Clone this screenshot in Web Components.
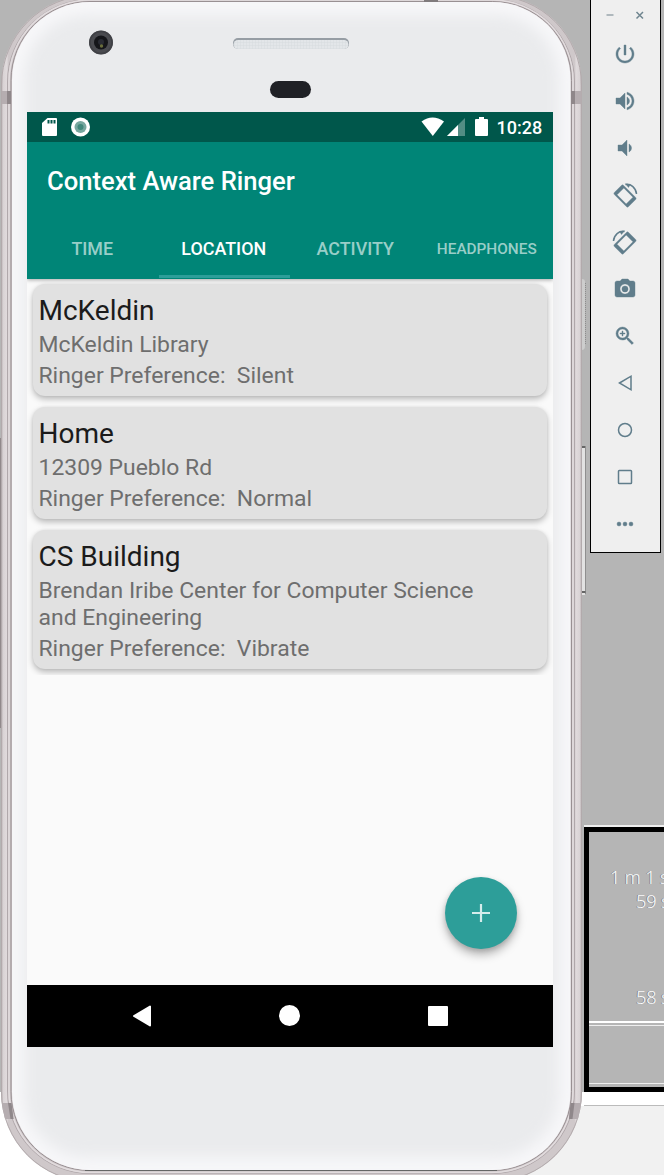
<!DOCTYPE html>
<html lang="en">
<head>
<meta charset="utf-8">
<title>Context Aware Ringer</title>
<style>
html,body{margin:0;height:100%;overflow:hidden;font-family:Roboto,sans-serif}
</style>
</head>
<body>
<emulator-desktop>
  <phone-device>
    <status-bar time="10:28"></status-bar>
    <app-bar>Context Aware Ringer</app-bar>
    <tab-bar>
      <tab-item>TIME</tab-item>
      <tab-item active>LOCATION</tab-item>
      <tab-item>ACTIVITY</tab-item>
      <tab-item small>HEADPHONES</tab-item>
    </tab-bar>
    <place-list>
      <place-card name="McKeldin" pref="Silent">McKeldin Library</place-card>
      <place-card name="Home" pref="Normal">12309 Pueblo Rd</place-card>
      <place-card name="CS Building" pref="Vibrate">Brendan Iribe Center for Computer Science and Engineering</place-card>
    </place-list>
    <add-button></add-button>
    <nav-bar></nav-bar>
  </phone-device>
  <emulator-toolbar slot="side"></emulator-toolbar>
  <timing-panel slot="side"></timing-panel>
</emulator-desktop>
<script>
const define = (name, html, after) => {
  const t = document.createElement('template');
  t.innerHTML = html;
  customElements.define(name, class extends HTMLElement {
    connectedCallback() {
      if (this.shadowRoot) return;
      this.attachShadow({mode: 'open'}).append(t.content.cloneNode(true));
      if (after) after(this, this.shadowRoot);
    }
  });
};

define('emulator-desktop', `<style>
:host{display:grid;grid-template-columns:584px 80px;width:664px;height:1175px;overflow:hidden;
 background:linear-gradient(90deg,#fff 0 300px,#f1f1f1 300px) 0 1106px no-repeat,linear-gradient(#b5b5b5 0 1092px,#fff 1092px)}
.side{display:flex;flex-direction:column;height:1175px;min-width:0}
</style><slot></slot><div class="side"><slot name="side"></slot></div>`);

define('phone-device', `<style>
:host{display:block;position:relative;width:584px;height:1175px}
svg{position:absolute;inset:0;overflow:visible}
.screen{position:relative;margin:112px 0 0 27px;width:526px;height:935px;display:flex;flex-direction:column;background:#fafafa}
</style>
<svg width="584" height="1175" viewBox="0 0 584 1175">
<defs>
<linearGradient id="rim" x1="1" x2="582" y1="0" y2="0" gradientUnits="userSpaceOnUse">
<stop offset="0" stop-color="#b3abad"/><stop offset=".004" stop-color="#d9d3d5"/><stop offset=".01" stop-color="#e0dadc"/><stop offset=".013" stop-color="#cfc8ca"/><stop offset=".987" stop-color="#cfc8ca"/><stop offset=".99" stop-color="#e0dadc"/><stop offset=".996" stop-color="#d9d3d5"/><stop offset="1" stop-color="#b3abad"/>
</linearGradient>
<filter id="soft" x="-10%" y="-10%" width="120%" height="120%"><feGaussianBlur stdDeviation="7"/></filter>
<clipPath id="face"><rect x="12" y="2" width="558.5" height="1168" rx="78"/></clipPath>
<pattern id="mesh" width="3" height="3" patternUnits="userSpaceOnUse"><rect width="3" height="3" fill="#e3e6e9"/><path d="M0 0h3M0 0v3" stroke="#d5d9dc" stroke-width=".8"/></pattern>
</defs>
<path d="M582 279q3 0 3 3v64q0 4-3 4z" fill="#cdcdcd"/><path d="M585.500 283v62" stroke="#8d8d8d" stroke-dasharray="1 1"/>
<path d="M582 447h3v148h-3z" fill="#e2e2e2"/><path d="M585.500 448v146" stroke="#8f8f8f"/><path d="M582 447h3.500M582 592h3.500" stroke="#666" stroke-width="2"/>
<path d="M0 438h2v290H0z" fill="#91898b"/>
<rect x="1" y="-5" width="581" height="1187" rx="90" fill="url(#rim)"/>
<rect x="1.500" y="-4.500" width="580" height="1186" rx="89.500" fill="none" stroke="#b2aaac"/>
<rect x="7.500" y="-.5" width="567" height="1174" rx="82.500" fill="none" stroke="#aca3a6" stroke-width=".9"/>
<rect x="9" y="0" width="564" height="1172.500" rx="81" fill="none" stroke="#e2dcde" stroke-width="1.500"/>
<rect x="11" y="1.500" width="560.500" height="1169" rx="79" fill="none" stroke="#999093"/>
<path d="M2 91h9v13H2zM571 91h10.500v13H571zM2 1103h9.500l2 16H5zM570.500 1103h10.500l-3 16h-9z" fill="#b5adb0"/>
<path d="M7 91h4v13H7zM571 91h4v13h-4zM8 1103h3.500l2 16h-3zM570.500 1103h4l-2 16h-3.500z" fill="#8f878a"/>
<path d="M424 0h14v2h-14z" fill="#807b7d"/>
<rect x="12" y="2" width="558.500" height="1168" rx="78" fill="#f7f7f9"/>
<g clip-path="url(#face)"><rect x="24" y="15" width="535" height="1142" rx="64" fill="#eaebed" filter="url(#soft)"/></g>
<path d="M85 1170.500h412" stroke="#666" stroke-width="1"/>
<circle cx="101" cy="42.500" r="12" fill="#4a4b50"/><circle cx="101" cy="42.500" r="11" fill="none" stroke="#404146" stroke-width="1.500"/>
<circle cx="101" cy="42.500" r="7" fill="#15161a"/><circle cx="101" cy="42" r="3" fill="#292b33"/><circle cx="101.500" cy="46" r="1.700" fill="#696d3c"/>
<rect x="233" y="38" width="116" height="11" rx="5" fill="#969da4"/><rect x="233.500" y="40" width="115" height="9" rx="4.500" fill="url(#mesh)"/>
<rect x="270" y="81" width="41" height="17" rx="8.500" fill="#202126"/>
</svg>
<div class="screen"><slot></slot></div>`);

define('status-bar', `<style>
:host{display:flex;height:30px;align-items:center;background:#00574b;color:#fff;box-sizing:border-box;font:500 18px/30px Roboto,sans-serif}
svg{flex:1}span{width:56.500px;padding-top:1px}
</style>
<svg width="469.500" height="30" viewBox="0 0 469.500 30" fill="#fff">
<path d="M20.500 6H29q1 0 1 1v16q0 1-1 1H16q-1 0-1-1V11z"/><path d="M20.500 8h2v3.500h-2zM23.500 8h2v3.500h-2zM26.500 8h2v3.500h-2z" fill="#00574b"/>
<circle cx="53.500" cy="15" r="9.500"/><circle cx="53.500" cy="15" r="6" fill="#77a79f"/><circle cx="53.500" cy="15" r="3" fill="#41877b"/>
<path d="M394.500 9.500Q405.500 1.500 417 9.500L405.800 24z"/><path d="M438 6v18h-18z" opacity=".32"/><path d="M431 13v11h-11z"/>
<path d="M452 5h5v2h3q1 0 1 1v15q0 1-1 1h-11q-1 0-1-1V8q0-1 1-1h3z"/></svg><span></span>`,
 (h, r) => r.querySelector('span').textContent = h.getAttribute('time'));

define('app-bar', `<style>:host{display:block;box-sizing:border-box;height:76px;padding-left:20px;background:#008577;color:#fff;font:500 25.600px/78px Roboto,sans-serif}</style><slot></slot>`);

define('tab-bar', `<style>:host{display:grid;grid-template-columns:repeat(4,1fr);height:60.500px;background:#008577;box-shadow:0 1px 4px #0005;clip-path:inset(0 0 -8px 0);position:relative;z-index:2}</style><slot></slot>`);
define('tab-item', `<style>
:host{display:block;box-sizing:border-box;height:60px;padding-right:1px;text-align:center;color:#99cec8;font:500 17.900px/62px Roboto,sans-serif}
:host([active]){color:#fff;background:linear-gradient(#2d9e99,#2d9e99) 0 100%/100% 3px no-repeat}
:host([small]){font-size:15.350px}
</style><slot></slot>`);

define('place-list', `<style>:host{display:flex;flex-direction:column;gap:11.500px;padding:5.500px 6px 6.500px;overflow:hidden}</style><slot></slot>`);
define('place-card', `<style>
:host{display:block;background:#e1e1e1;border-radius:12px;padding:10px 60px 6.500px 5.500px;box-shadow:0 3px 6px #0004,0 0 3px #0001;color:#6e6e6e;font:400 22.930px/27px Roboto,sans-serif}
h2{margin:0 0 4px;font:400 28px/33px Roboto,sans-serif;color:#1b1b1b}
p{margin:0 0 4px}
.pref{margin:0;white-space:pre}
</style><h2></h2><p><slot></slot></p><div class="pref"></div>`,
 (h, r) => {
  r.querySelector('h2').textContent = h.getAttribute('name');
  r.querySelector('.pref').textContent = 'Ringer Preference:  ' + h.getAttribute('pref');
 });

define('add-button', `<style>:host{display:block;margin:auto 36px 36px auto;width:72px;height:72px;border-radius:50%;background:#2d9e99;box-shadow:0 6px 10px #0004,0 2px 5px #0002}</style>
<svg width="72" height="72" viewBox="0 0 72 72"><path d="M36 27v18M27 36h18" stroke="#d5eceb" stroke-width="2.200"/></svg>`);

define('nav-bar', `<style>:host{display:block;height:62px;background:#000}svg{display:block}</style>
<svg width="526" height="62" viewBox="0 0 526 62" fill="#fff" stroke="#fff" stroke-width="2" stroke-linejoin="round"><path d="M107 31l16-9.500v19z"/><circle cx="262.500" cy="30.500" r="9.500"/><path d="M402 22h18v18h-18z"/></svg>`);

const rotate = '<g transform="translate(0 1) rotate(-45)"><path fill-rule="evenodd" d="M-5-10h10q1.500 0 1.500 1.500v17Q6.500 10 5 10H-5Q-6.500 10-6.500 8.500v-17Q-6.500-10-5-10zM-4.800-6.500v13H4.800v-13z"/></g><path d="M.5-10.500C6-11.500 11-7 11.500-1" fill="none" stroke="#607d8b" stroke-width="1.500"/><path d="M.5-11.200L5-10 3.500-7.500z"/>';
const icons = [
 '<path transform="translate(-12-12)" d="M13 3h-2v10h2V3zm4.830 2.170l-1.420 1.420C17.990 7.860 19 9.810 19 12c0 3.870-3.130 7-7 7s-7-3.130-7-7c0-2.190 1.010-4.140 2.580-5.420L6.170 5.170C4.230 6.820 3 9.260 3 12c0 4.970 4.030 9 9 9s9-4.030 9-9c0-2.740-1.230-5.180-3.170-6.830z"/>',
 '<path transform="translate(-12-12)" d="M3 9v6h4l5 5V4L7 9H3zm13.500 3c0-1.770-1.020-3.290-2.500-4.030v8.050c1.480-.73 2.500-2.250 2.500-4.020zM14 3.230v2.060c2.890.86 5 3.540 5 6.710s-2.110 5.850-5 6.710v2.060c4.010-.91 7-4.490 7-8.770s-2.990-7.860-7-8.770z"/>',
 '<path transform="translate(-12-12)" d="M18.500 12c0-1.770-1.020-3.290-2.500-4.030v8.050c1.480-.73 2.500-2.250 2.500-4.020zM5 9v6h4l5 5V4L9 9H5z"/>',
 rotate,
 '<g transform="scale(-1 1)">' + rotate + '</g>',
 '<path transform="translate(-12-12)" fill-rule="evenodd" d="M9 2L7.170 4H4c-1.100 0-2 .9-2 2v12c0 1.100.9 2 2 2h16c1.100 0 2-.9 2-2V6c0-1.100-.9-2-2-2h-3.170L15 2H9zm3 15c-2.760 0-5-2.240-5-5s2.240-5 5-5 5 2.240 5 5-2.240 5-5 5z"/><circle r="3.100"/>',
 '<path transform="translate(-12-12)" d="M15.500 14h-.79l-.28-.27A6.471 6.471 0 0 0 16 9.500 6.500 6.500 0 1 0 9.500 16c1.610 0 3.090-.59 4.230-1.570l.27.280v.79l5 4.990L20.490 19l-4.990-5zm-6 0C7.010 14 5 11.990 5 9.500S7.010 5 9.500 5 14 7.010 14 9.500 11.990 14 9.500 14zm2.500-4h-2v2H9v-2H7V9h2V7h1v2h2v1z"/>',
 '<path d="M-5.500 0L6-6.800V6.800z" fill="none" stroke="#607d8b" stroke-width="1.500"/>',
 '<circle r="6.500" fill="none" stroke="#607d8b" stroke-width="1.500"/>',
 '<rect x="-6.500" y="-6.500" width="13" height="13" rx=".8" fill="none" stroke="#607d8b" stroke-width="1.500"/>',
 '<circle cx="-6" r="2"/><circle r="2"/><circle cx="6" r="2"/>'
];
define('emulator-toolbar', `<style>
:host{display:flex;flex-direction:column;align-items:center;box-sizing:border-box;width:71px;height:553px;margin-left:6px;background:#efefef;border:1px solid #000;border-top:0;padding-right:1px;fill:#607d8b}
svg{display:block;flex:none}
.icon{stroke:#607d8b;stroke-width:.4}
</style><svg width="60" height="30" viewBox="0 0 60 30" fill="none" stroke-width="1.500"><path d="M11.500 15h7" stroke="#9aa6ac"/><path d="M41.500 12l6.500 6.500M48 12l-6.500 6.500" stroke="#6f858f"/></svg>
${icons.map(i => `<svg class="icon" width="47" height="47" viewBox="-23 -24 47 47">${i}</svg>`).join('')}`);

define('timing-panel', `<style>
:host{display:block;box-sizing:border-box;margin-top:272px;height:350px;border-top:2px solid #eee}
.box{box-sizing:border-box;height:265px;width:100px;border:5px solid #000;border-right:0;background:#b5b5b5;color:#fff;font:300 18px/24px "Open Sans","Noto Sans",sans-serif;white-space:pre;padding-top:33px;text-shadow:-1px 0 #7d848d}
.t{display:block;padding-left:47px}.first{padding-left:21px;word-spacing:-.2px}.gap{height:72px}
.foot{height:60px;margin-top:12px;border-top:2px solid #fff;border-bottom:1px solid #eee}
.foot::before{content:"";display:block;height:2px;border-bottom:1px solid #eee}
.tail{height:14px;background:#fff;border-bottom:1px solid #bbb;box-sizing:border-box}
.rest{height:90px;background:#f1f1f1}
</style><div class="box"><span class="t first">1 m 1 s</span><span class="t">59 s</span><div class="gap"></div><span class="t">58 s</span><div class="foot"></div></div><div class="tail"></div><div class="rest"></div>`);
</script>
</body>
</html>
